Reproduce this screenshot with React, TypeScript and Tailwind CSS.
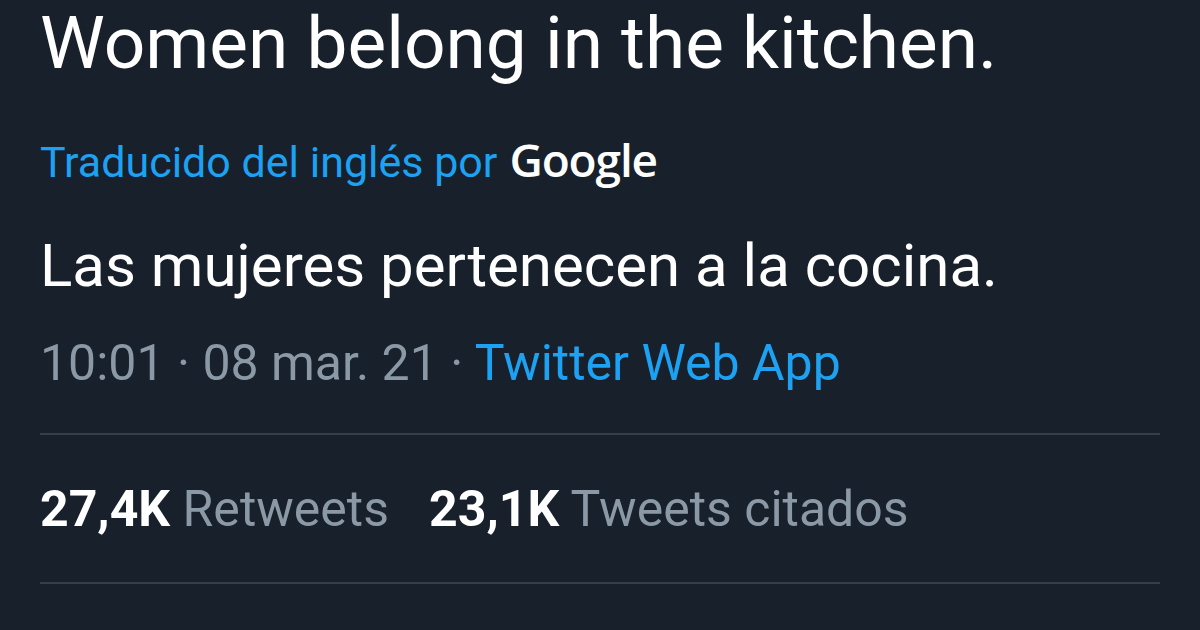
export default function App() {
  return (
    <div className="w-[1200px] h-[630px] overflow-hidden bg-[#17202b] px-10 font-['Roboto',sans-serif]">
      <div className="flex flex-col pt-[7px]">
        <p className="text-[73px] leading-none text-white">Women belong in the kitchen.</p>

        <div className="mt-[56px] flex items-baseline gap-3 leading-none">
          <span className="text-[43px] text-[#1da1f2]">Traducido del inglés por</span>
          <span className="font-['Open_Sans',sans-serif] text-[46px] font-semibold tracking-tight text-white">Google</span>
        </div>

        <p className="mt-[52px] text-[60px] leading-none text-white">Las mujeres pertenecen a la cocina.</p>

        <p className="mt-[42px] text-[50px] leading-none text-[#8b98a5]">
          10:01 · 08 mar. 21 · <span className="text-[#1da1f2]">Twitter Web App</span>
        </p>

        <div className="mt-[45px] h-[2px] bg-[#333f4a]" />

        <div className="mt-[49px] flex gap-10 text-[50px] leading-none">
          <p>
            <span className="font-bold text-white">27,4K</span> <span className="text-[#8b98a5]">Retweets</span>
          </p>
          <p>
            <span className="font-bold text-white">23,1K</span> <span className="text-[#8b98a5]">Tweets citados</span>
          </p>
        </div>

        <div className="mt-[48px] h-[2px] bg-[#333f4a]" />
      </div>
    </div>
  );
}
